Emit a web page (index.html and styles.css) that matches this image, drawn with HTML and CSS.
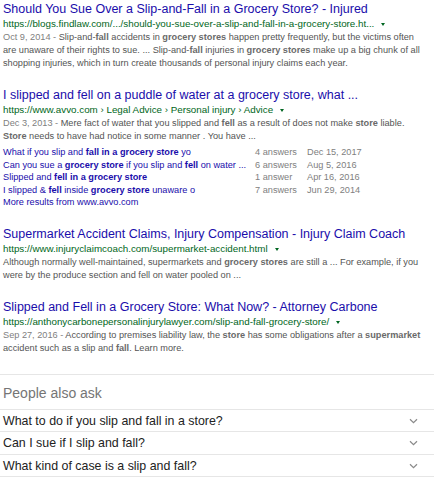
FILE: index.html
```html
<!DOCTYPE html>
<html>
<head>
<meta charset="utf-8">
<link rel="stylesheet" href="styles.css">
</head>
<body>
<div class="page">
  <div class="result">
    <a class="title">Should You Sue Over a Slip-and-Fall in a Grocery Store? - Injured</a>
    <div class="url">https://blogs.findlaw.com/.../should-you-sue-over-a-slip-and-fall-in-a-grocery-store.ht...<span class="caret"></span></div>
    <div class="snippet"><span class="date">Oct 9, 2014 - </span>Slip-and-<b>fall</b> accidents in <b>grocery stores</b> happen pretty frequently, but the victims often<br>are unaware of their rights to sue. ... Slip-and-<b>fall</b> injuries in <b>grocery stores</b> make up a big chunk of all<br>shopping injuries, which in turn create thousands of personal injury claims each year.</div>
  </div>

  <div class="result">
    <a class="title">I slipped and fell on a puddle of water at a grocery store, what ...</a>
    <div class="url">https://www.avvo.com › Legal Advice › Personal injury › Advice<span class="caret"></span></div>
    <div class="snippet"><span class="date">Dec 3, 2013 - </span>Mere fact of water that you slipped and <b>fell</b> as a result of does not make <b>store</b> liable.<br><b>Store</b> needs to have had notice in some manner . You have ...</div>
    <div class="sitelinks">
      <a class="sl">What if you slip and <b>fall in a grocery store</b> yo</a><span class="meta">4 answers</span><span class="meta">Dec 15, 2017</span>
      <a class="sl">Can you sue a <b>grocery store</b> if you slip and <b>fell</b> on water ...</a><span class="meta">6 answers</span><span class="meta">Aug 5, 2016</span>
      <a class="sl">Slipped and <b>fell in a grocery store</b></a><span class="meta">1 answer</span><span class="meta">Apr 16, 2016</span>
      <a class="sl">I slipped &amp; <b>fell</b> inside <b>grocery store</b> unaware o</a><span class="meta">7 answers</span><span class="meta">Jun 29, 2014</span>
      <a class="sl more">More results from www.avvo.com</a>
    </div>
  </div>

  <div class="result">
    <a class="title">Supermarket Accident Claims, Injury Compensation - Injury Claim Coach</a>
    <div class="url">https://www.injuryclaimcoach.com/supermarket-accident.html<span class="caret"></span></div>
    <div class="snippet">Although normally well-maintained, supermarkets and <b>grocery stores</b> are still a ... For example, if you<br>were by the produce section and fell on water pooled on ...</div>
  </div>

  <div class="result last">
    <a class="title">Slipped and Fell in a Grocery Store: What Now? - Attorney Carbone</a>
    <div class="url">https://anthonycarbonepersonalinjurylawyer.com/slip-and-fall-grocery-store/<span class="caret"></span></div>
    <div class="snippet"><span class="date">Sep 27, 2016 - </span>According to premises liability law, the <b>store</b> has some obligations after a <b>supermarket</b><br>accident such as a slip and <b>fall</b>. Learn more.</div>
  </div>

  <div class="paa">
    <div class="paa-head">People also ask</div>
    <div class="q"><span>What to do if you slip and fall in a store?</span><svg class="chev" width="9" height="6" viewBox="0 0 9 6"><path d="M1 1.2 L4.5 4.6 L8 1.2" fill="none" stroke="#8a8a8a" stroke-width="1.2"/></svg></div>
    <div class="q"><span>Can I sue if I slip and fall?</span><svg class="chev" width="9" height="6" viewBox="0 0 9 6"><path d="M1 1.2 L4.5 4.6 L8 1.2" fill="none" stroke="#8a8a8a" stroke-width="1.2"/></svg></div>
    <div class="q"><span>What kind of case is a slip and fall?</span><svg class="chev" width="9" height="6" viewBox="0 0 9 6"><path d="M1 1.2 L4.5 4.6 L8 1.2" fill="none" stroke="#8a8a8a" stroke-width="1.2"/></svg></div>
  </div>
</div>
</body>
</html>
```

FILE: styles.css
```css
html, body {
  margin: 0;
  padding: 0;
  background: #fff;
}
.page {
  font-family: "Liberation Sans", Arial, sans-serif;
  padding: 2px 0 0 0;
  width: 434px;
}
.result {
  padding-left: 3px;
  margin-bottom: 18px;
}
.result.last {
  margin-bottom: 19px;
}
.title {
  display: block;
  font-size: 12.5px;
  line-height: 15px;
  color: #1a0dab;
  white-space: nowrap;
}
.url {
  font-size: 9.8px;
  line-height: 14px;
  color: #006621;
  white-space: nowrap;
}
.caret {
  display: inline-block;
  width: 0;
  height: 0;
  border-left: 2.5px solid transparent;
  border-right: 2.5px solid transparent;
  border-top: 3.5px solid #006621;
  margin-left: 7px;
  vertical-align: 1px;
}
.snippet {
  font-size: 9.2px;
  line-height: 13px;
  color: #545454;
  white-space: nowrap;
}
.snippet b {
  color: #6a6a6a;
}
.date {
  color: #808080;
}
.sitelinks {
  margin-top: 3px;
  display: grid;
  grid-template-columns: 252px 52px auto;
  font-size: 9.2px;
  line-height: 12.6px;
  white-space: nowrap;
}
.sl {
  color: #1a0dab;
}
.more {
  grid-column: 1 / 4;
}
.meta {
  color: #808080;
}
.paa {
  border-top: 1px solid #e6e6e6;
}
.paa-head {
  font-size: 14px;
  line-height: 18px;
  color: #757575;
  padding: 9px 0 7px 3px;
  border-bottom: 1px solid #e6e6e6;
}
.q {
  display: flex;
  align-items: center;
  justify-content: space-between;
  height: 21.5px;
  padding: 0 16px 0 3px;
  font-size: 12.4px;
  color: #222;
  border-bottom: 1px solid #e6e6e6;
}
.chev {
  display: block;
}
```
